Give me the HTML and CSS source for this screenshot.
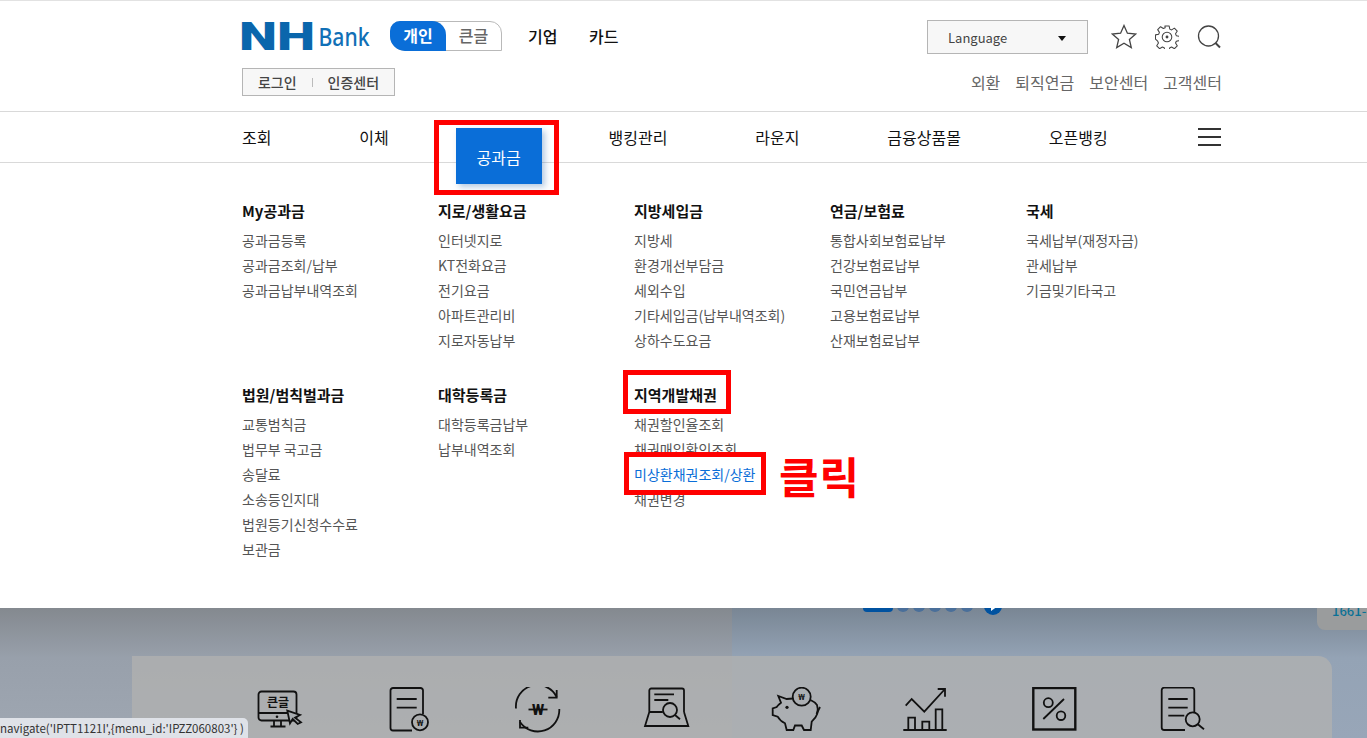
FILE: index.html
```html
<!DOCTYPE html>
<html>

<head>
    <meta charset="UTF-8">
    <title>NH Bank</title>
    <link rel="stylesheet" href="styles.css">
</head>

<body>
    <div class='page'>
        <div class='header'>
            <div class='top'>
                <div class='left'>
                    <svg class='logo' width='146' height='50' viewBox='0 0 146 50'>
                        <text x='1' y='37' class='logo-nh' textLength='76' lengthAdjust='spacingAndGlyphs'>NH</text>
                        <text x='80.500' y='33' class='logo-bank' textLength='51' lengthAdjust='spacingAndGlyphs'>Bank</text>
                    </svg>
                    <div class='toggle'>
                        <div class='toggle-on'>개인</div>
                        <div class='toggle-off'>큰글</div>
                    </div>
                    <div class='biz'>기업</div>
                    <div class='biz'>카드</div>
                </div>
                <div class='right'>
                    <div class='lang'>
                        <span>Language</span>
                        <i class='arrow'></i>
                    </div>
                    <svg class='star' width='26' height='25' viewBox='0 0 26 25'>
                        <path d='M13 1.500l3.400 7.700 8.300.8-6.300 5.500 1.900 8.100L13 19.300l-7.300 4.300 1.900-8.100L1.300 10l8.300-.8z' fill='none' stroke='#444' stroke-width='1.300' />
                    </svg>
                    <svg class='gear' width='24' height='24' viewBox='0 0 25 25'>
                        <path d='M10.300 1h4.400l.7 3.300 1.900.8 2.900-1.800 3 3-1.800 2.900.8 1.900 3.300.7v4.400l-3.300.7-.8 1.900 1.800 2.900-3 3-2.900-1.800-1.900.8-.7 3.300h-4.400l-.7-3.300-1.900-.8-2.900 1.800-3-3 1.800-2.900-.8-1.900L.5 14.700v-4.400l3.300-.7.8-1.900-1.800-2.900 3-3 2.900 1.800 1.900-.8z' fill='none' stroke='#444' stroke-width='1.100' stroke-linejoin='round' />
                        <circle cx='12.500' cy='12.500' r='5' fill='none' stroke='#444' stroke-width='1.100' />
                        <circle cx='12.500' cy='12.500' r='1.500' fill='#444' />
                    </svg>
                    <svg class='search' width='25' height='24' viewBox='0 0 25 24'>
                        <circle cx='11.500' cy='11' r='10' fill='none' stroke='#444' stroke-width='1.300' />
                        <path d='M18.500 18l4.500 4.500' stroke='#444' stroke-width='2' />
                    </svg>
                </div>
            </div>
            <div class='sub'>
                <div class='login'>
                    <span>로그인</span>
                    <i class='bar'></i>
                    <span>인증센터</span>
                </div>
                <div class='links'>
                    <span>외환</span>
                    <span>퇴직연금</span>
                    <span>보안센터</span>
                    <span>고객센터</span>
                </div>
            </div>
        </div>

        <div class='nav'>
            <div class='nav-in'>
                <div class='nav-item'>조회</div>
                <div class='nav-item'>이체</div>
                <div class='nav-item active'>공과금</div>
                <div class='nav-item'>뱅킹관리</div>
                <div class='nav-item'>라운지</div>
                <div class='nav-item'>금융상품몰</div>
                <div class='nav-item'>오픈뱅킹</div>
                <div class='burger'><i></i><i></i><i></i></div>
            </div>
        </div>

        <div class='mega'>
            <div class='group'>
                <h3>My공과금</h3>
                <p>공과금등록</p>
                <p>공과금조회/납부</p>
                <p>공과금납부내역조회</p>
            </div>
            <div class='group'>
                <h3>지로/생활요금</h3>
                <p>인터넷지로</p>
                <p>KT전화요금</p>
                <p>전기요금</p>
                <p>아파트관리비</p>
                <p>지로자동납부</p>
            </div>
            <div class='group'>
                <h3>지방세입금</h3>
                <p>지방세</p>
                <p>환경개선부담금</p>
                <p>세외수입</p>
                <p>기타세입금(납부내역조회)</p>
                <p>상하수도요금</p>
            </div>
            <div class='group'>
                <h3>연금/보험료</h3>
                <p>통합사회보험료납부</p>
                <p>건강보험료납부</p>
                <p>국민연금납부</p>
                <p>고용보험료납부</p>
                <p>산재보험료납부</p>
            </div>
            <div class='group'>
                <h3>국세</h3>
                <p>국세납부(재정자금)</p>
                <p>관세납부</p>
                <p>기금및기타국고</p>
            </div>
            <div class='group'>
                <h3>법원/범칙벌과금</h3>
                <p>교통범칙금</p>
                <p>법무부 국고금</p>
                <p>송달료</p>
                <p>소송등인지대</p>
                <p>법원등기신청수수료</p>
                <p>보관금</p>
            </div>
            <div class='group'>
                <h3>대학등록금</h3>
                <p>대학등록금납부</p>
                <p>납부내역조회</p>
            </div>
            <div class='group'>
                <h3>지역개발채권</h3>
                <p>채권할인율조회</p>
                <p>채권매입확인조회</p>
                <p class='on'>미상환채권조회/상환</p>
                <p>채권변경</p>
            </div>
        </div>

        <div class='under'>
            <div class='under-left'></div>
            <div class='under-right'>
                <div class='pager'>
                    <i class='pager-long'></i>
                    <i></i><i></i><i></i><i></i><i></i>
                    <b class='pager-play'></b>
                </div>
            </div>
            <div class='phone'><span>1661-7</span></div>
            <div class='quick'>
                <div class='quick-item'>
                    <svg width='51' height='46' viewBox='0 0 51 46'>
                        <rect x='3.500' y='4.500' width='38' height='29' rx='3' class='ln' />
                        <path d='M3.500 26h30M19 34v5M26 34v5M15.500 39.500h15' class='ln' />
                        <circle cx='22' cy='29.800' r='1.300' fill='#111' />
                        <text x='23' y='19.500' class='ic-text'>큰글</text>
                        <path d='M32.300 23.700L45 28l-5 2.700 6 4.600-3.300 1.700-5-5-2.700 4.300z' fill='#a9adb0' stroke='#111' stroke-width='1.800' />
                    </svg>
                </div>
                <div class='quick-item'>
                    <svg width='51' height='46' viewBox='0 0 51 46'>
                        <path d='M28 43.500H9a2.500 2.500 0 0 1-2.500-2.500V3.500A2.500 2.500 0 0 1 9 1h27.500A2.500 2.500 0 0 1 39 3.500V27' class='ln' />
                        <path d='M12.700 12h20M12.700 20.700h20' class='ln' />
                        <circle cx='36' cy='35.300' r='8' class='ln' />
                        <text x='36' y='38.500' class='ic-won'>₩</text>
                    </svg>
                </div>
                <div class='quick-item'>
                    <svg width='51' height='46' viewBox='0 0 51 46'>
                        <path d='M3 21.500A21.500 21.500 0 0 1 43.700 10M46.300 22A21.500 21.500 0 0 1 7 35' class='ln' />
                        <path d='M43.700 3v7.700h-8.400M7 33v7.700h8.300' class='ln' />
                        <path d='M15.500 22.500h19' class='ln' />
                        <text x='25' y='27.500' class='ic-w'>W</text>
                    </svg>
                </div>
                <div class='quick-item'>
                    <svg width='51' height='46' viewBox='0 0 51 46'>
                        <path d='M7.300 25V3.500a2 2 0 0 1 2-2H40a2 2 0 0 1 2 2V25M7.300 25h13.500M7.300 25L3 39h43.300L42 25' class='ln' />
                        <path d='M12.300 7.300H32M12.300 13h14' class='ln' />
                        <circle cx='28' cy='23' r='7' class='ln' />
                        <path d='M33 28l5 4.300' class='ln' />
                    </svg>
                </div>
                <div class='quick-item'>
                    <svg width='51' height='46' viewBox='0 0 51 46'>
                        <path d='M22 11.500l-6.300.5-8.400-3L10 15.700Q7 18 5.700 20l-4 1.300V28l5 1.700Q9 34 14 36.300l1.700 6.700h6.600l1.700-4.500h6.700l2.300 4.500h6.700l1-8.300c5.300-4.700 7.300-10.700 5.300-16.700q-2-3-6.500-5' class='ln' />
                        <circle cx='30.700' cy='9.700' r='9' class='ln' />
                        <text x='30.700' y='13' class='ic-won'>₩</text>
                        <circle cx='16' cy='20.300' r='1.600' fill='#111' />
                        <path d='M45.500 27l3.500-7' class='ln' />
                    </svg>
                </div>
                <div class='quick-item'>
                    <svg width='51' height='46' viewBox='0 0 51 46'>
                        <path d='M5.700 18.700l6-6.700 12.600 12.700L45 2M37.700 2H45v7.700' class='ln' />
                        <path d='M3.300 43h43.400M8.300 43V30.700H15V43M22.300 43v-8.300h7V43M35.700 43V22.300h6.600V43' class='ln' />
                    </svg>
                </div>
                <div class='quick-item'>
                    <svg width='51' height='46' viewBox='0 0 51 46'>
                        <rect x='4.300' y='1' width='42' height='41.500' class='ln thick' />
                        <path d='M35 12L14.300 32' class='ln' />
                        <circle cx='19.300' cy='15.700' r='4.500' class='ln' />
                        <circle cx='32' cy='28.700' r='4.300' class='ln' />
                    </svg>
                </div>
                <div class='quick-item'>
                    <svg width='51' height='46' viewBox='0 0 51 46'>
                        <path d='M27 43H6.200a2.500 2.500 0 0 1-2.500-2.500V3.200A2.500 2.500 0 0 1 6.200.7h27.600a2.500 2.500 0 0 1 2.500 2.500V25' class='ln' />
                        <path d='M10.300 12h19.400M10.300 20.700h19.400M10.300 28.700h16' class='ln' />
                        <circle cx='34.700' cy='32.300' r='7' class='ln' />
                        <path d='M39.800 37.300l6.200 5' class='ln' />
                    </svg>
                </div>
            </div>
        </div>

        <div class='mark mark-tab'></div>
        <div class='mark mark-title'></div>
        <div class='mark mark-item'></div>
        <div class='click'>클릭</div>
        <div class='status'>navigate('IPTT1121I',{menu_id:'IPZZ060803'} )</div>
    </div>
</body>

</html>
```

FILE: styles.css
```css
html,
body {
    padding: 0;
    margin: 0;
    overflow: hidden;
}

body {
    font-family: "Noto Sans CJK KR", "Noto Sans", sans-serif;
    color: #111;
}

.page {
    position: relative;
    width: 1367px;
    height: 738px;
    overflow: hidden;
    background: #fff;
}

.header {
    height: 112px;
    padding: 20px 145px 0 242px;
    box-sizing: border-box;
    border-top: 1px solid #e2e2e2;
    border-bottom: 1px solid #d9d9d9;
}

.top {
    display: flex;
    justify-content: space-between;
    height: 47px;
}

.left {
    display: flex;
    align-items: flex-start;
}

.logo {
    display: block;
    margin: -8px 6px 0 -4px;
}

.logo-nh {
    font-family: Roboto, sans-serif;
    font-weight: 900;
    font-size: 38px;
    fill: #0a66ac;
}

.logo-bank {
    font-family: "Noto Sans", sans-serif;
    font-weight: 500;
    font-size: 26px;
    fill: #1170b6;
}

.toggle {
    display: flex;
    width: 112px;
    height: 30px;
    box-sizing: border-box;
    border: 1px solid #b9b9b9;
    border-radius: 10px 12px 0 15px;
    margin-right: 26px;
}

.toggle-on {
    width: 56px;
    height: 30px;
    margin: -1px 0 -1px -1px;
    background: #0a6ed8;
    border-radius: 10px 14px 0 15px;
    color: #fff;
    font-size: 16px;
    font-weight: 700;
    line-height: 29px;
    text-align: center;
}

.toggle-off {
    flex: 1;
    color: #666;
    font-size: 16px;
    font-weight: 500;
    line-height: 27px;
    text-align: center;
}

.biz {
    margin-right: 31.500px;
    font-size: 16px;
    font-weight: 500;
    line-height: 31px;
}

.right {
    display: flex;
    align-items: flex-start;
}

.lang {
    display: flex;
    justify-content: space-between;
    align-items: center;
    width: 161px;
    height: 34px;
    box-sizing: border-box;
    margin-top: -1px;
    margin-right: 23px;
    padding: 0 21px 0 20px;
    background: #f7f7f7;
    border: 1px solid #b5b5b5;
    color: #444;
    font-size: 13px;
}

.arrow {
    width: 0;
    height: 0;
    margin-top: 2px;
    border-left: 4px solid transparent;
    border-right: 4px solid transparent;
    border-top: 5px solid #111;
}

.star {
    margin: 3px 18px 0 0;
}

.gear {
    margin: 4px 18px 0 0;
}

.search {
    margin-top: 4px;
}

.sub {
    display: flex;
    justify-content: space-between;
    align-items: flex-start;
}

.login {
    display: flex;
    align-items: center;
    justify-content: center;
    width: 153px;
    height: 28px;
    box-sizing: border-box;
    background: #f7f7f7;
    border: 1px solid #b5b5b5;
    color: #444;
    font-size: 14px;
    font-weight: 500;
}

.bar {
    width: 1px;
    height: 9px;
    margin: 0 15px;
    background: #bbb;
}

.links {
    display: flex;
    gap: 15px;
    color: #666;
    font-size: 16px;
    line-height: 28px;
}

.nav {
    height: 50px;
    border-bottom: 1px solid #d9d9d9;
}

.nav-in {
    display: flex;
    gap: 87.850px;
    height: 50px;
    padding: 0 146px 0 242px;
}

.nav-item {
    font-size: 16px;
    line-height: 50px;
}

.nav-item.active {
    position: relative;
    z-index: 1;
    align-self: flex-start;
    height: 56px;
    margin: 16px -21px 0;
    padding: 0 21px;
    background: #0a6ed8;
    box-shadow: 3px 3px 6px rgba(10, 80, 160, .3);
    color: #fff;
    line-height: 58px;
}

.burger {
    display: flex;
    flex-direction: column;
    justify-content: space-between;
    width: 23px;
    height: 18px;
    margin: 16px 0 0 auto;
}

.burger i {
    height: 2px;
    background: #333;
}

.mega {
    display: grid;
    grid-template-columns: repeat(5, 196px);
    grid-template-rows: 155px auto;
    row-gap: 29px;
    height: 445px;
    box-sizing: border-box;
    padding: 35px 0 0 242px;
    background: #fff;
}

.group h3 {
    margin: 0 0 5px;
    font-size: 15px;
    font-weight: 700;
    line-height: 25px;
}

.group p {
    margin: 0;
    color: #555;
    font-size: 14px;
    line-height: 25px;
}

.group p.on {
    color: #0a6ed8;
}

.under {
    display: flex;
    position: relative;
    height: 130px;
}

.under-left {
    width: 732px;
    background: linear-gradient(#84898f 0, #98a0ab 50px, #9fa7b2 130px);
}

.under-right {
    flex: 1;
    padding-left: 131px;
    background: linear-gradient(#798694 0, #94a3b5 50px, #98a6b8 130px);
}

.pager {
    display: flex;
    align-items: flex-start;
    gap: 4px;
    height: 8px;
    overflow: hidden;
}

.pager i {
    width: 12px;
    height: 12px;
    margin-top: -8px;
    border-radius: 6px;
    background: #4a6f9a;
}

.pager i.pager-long {
    width: 30px;
    border-radius: 4px;
    background: #0052a0;
}

.pager-play {
    display: flex;
    align-items: center;
    justify-content: center;
    width: 18px;
    height: 18px;
    margin: -11px 0 0 7px;
    border-radius: 50%;
    background: #0052a0;
}

.pager-play::after {
    content: '';
    width: 0;
    height: 0;
    margin-left: 2px;
    border-top: 5px solid transparent;
    border-bottom: 5px solid transparent;
    border-left: 7px solid #fff;
}

.phone {
    position: absolute;
    top: 0;
    right: 0;
    width: 50px;
    height: 22px;
    padding-left: 15px;
    box-sizing: border-box;
    border-radius: 0 0 0 8px;
    background: #9a9c9d;
    color: #0a7196;
    font-size: 13px;
    font-weight: 500;
    white-space: nowrap;
    overflow: hidden;
}

.phone span {
    display: block;
    margin-top: -6px;
    line-height: 18px;
}

.quick {
    position: absolute;
    left: 132px;
    top: 48px;
    display: flex;
    justify-content: center;
    width: 1200px;
    height: 82px;
    padding-top: 31px;
    box-sizing: border-box;
    border-radius: 0 14px 0 0;
    background: rgba(178, 178, 176, .75);
}

.quick-item {
    display: flex;
    justify-content: center;
    align-items: flex-start;
    width: 129px;
}

.ln {
    fill: none;
    stroke: #111;
    stroke-width: 1.800;
}

.ln.thick {
    stroke-width: 2.400;
}

.ic-text {
    font-size: 12px;
    font-weight: 700;
    text-anchor: middle;
    fill: #111;
}

.ic-won {
    font-family: "Noto Sans", sans-serif;
    font-size: 9px;
    font-weight: 700;
    text-anchor: middle;
    fill: #111;
}

.ic-w {
    font-family: Roboto, sans-serif;
    font-size: 14px;
    font-weight: 900;
    text-anchor: middle;
    fill: #111;
}

.mark {
    position: absolute;
    box-sizing: border-box;
    border: 5px solid #f00;
}

.mark-tab {
    left: 434px;
    top: 120px;
    width: 125px;
    height: 75px;
}

.mark-title {
    left: 623px;
    top: 370px;
    width: 108px;
    height: 44px;
}

.mark-item {
    left: 624px;
    top: 452px;
    width: 142px;
    height: 43px;
}

.click {
    position: absolute;
    left: 779px;
    top: 445px;
    color: #f00;
    font-size: 43px;
    font-weight: 700;
    letter-spacing: 1px;
    line-height: 60px;
}

.status {
    position: absolute;
    left: 0;
    bottom: 0;
    height: 20px;
    width: 248px;
    box-sizing: border-box;
    border-radius: 0 5px 0 0;
    background: #dfe2e8;
    color: #333;
    font-size: 11.500px;
    line-height: 20px;
    white-space: nowrap;
}
```
